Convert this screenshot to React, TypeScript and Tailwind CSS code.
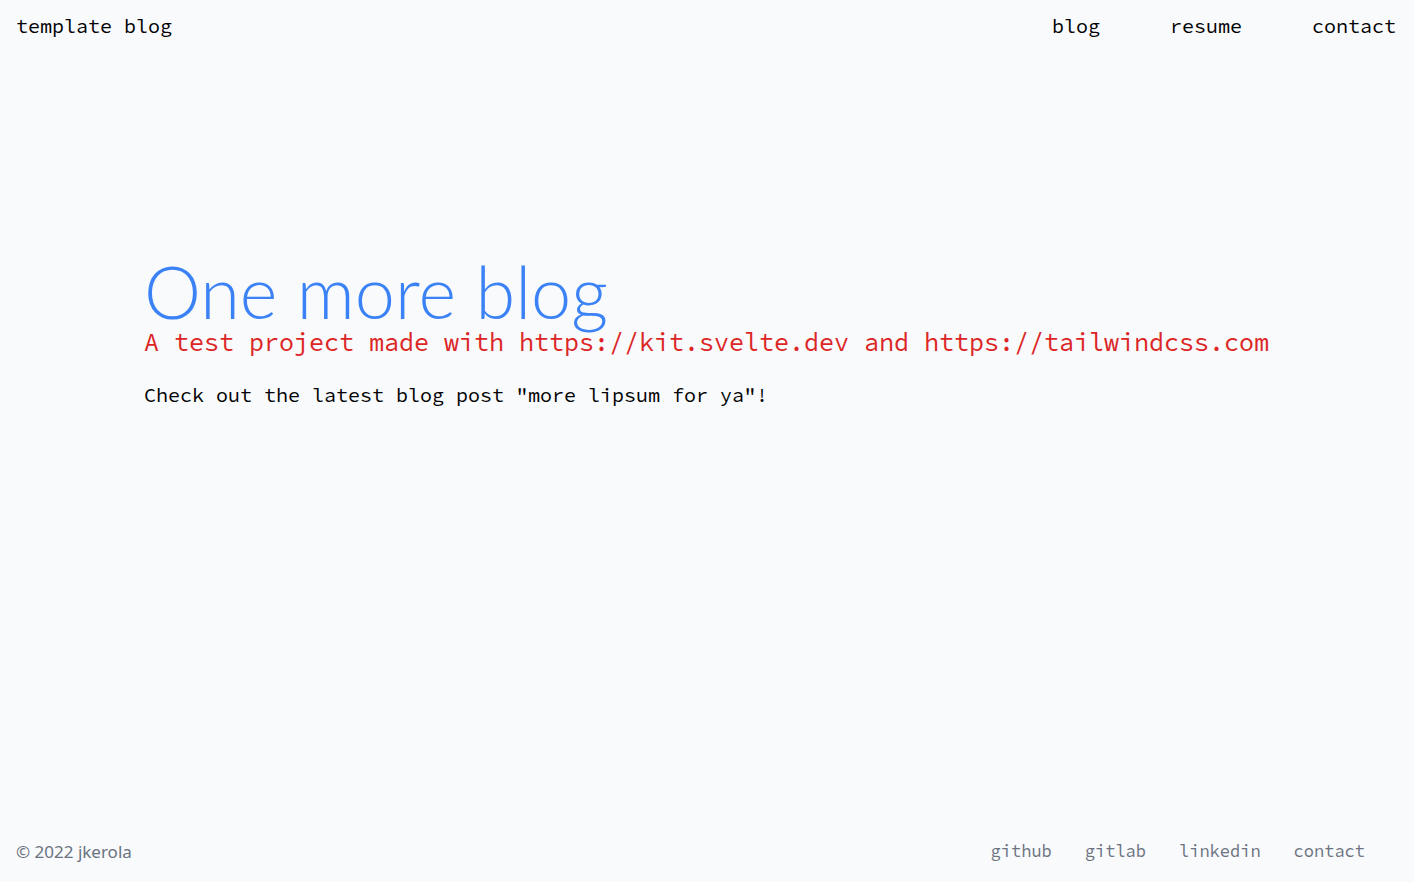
import React from 'react';

const mono = "font-['Source_Code_Pro','DejaVu_Sans_Mono','Liberation_Mono',monospace]";

export default function App() {
  const nav = ["blog", "resume", "contact"];
  const links = ["github", "gitlab", "linkedin", "contact"];

  return (
    <div className="min-h-screen bg-[#f8fafc] flex flex-col text-black">
      <header className={`flex items-center justify-between pl-4 pr-[18px] pt-3 text-xl ${mono}`}>
        <a>template blog</a>
        <nav className="flex gap-[70px]">
          {nav.map(n => (
            <a key={n}>{n}</a>
          ))}
        </nav>
      </header>

      <main className="flex-1 px-36 pt-[215px]">
        <h1 className="text-[72px] leading-none font-light text-[#3b82f6] font-['Lato',sans-serif]">
          One more blog
        </h1>
        <p className={`text-[25px] leading-8 text-[#dc2626] -mt-[1px] ${mono}`}>
          A test project made with https://kit.svelte.dev and https://tailwindcss.com
        </p>
        <p className={`text-xl mt-[23px] ${mono}`}>
          Check out the latest blog post "more lipsum for ya"!
        </p>
      </main>

      <footer className="flex items-center justify-between px-4 pb-[18px]">
        <span className="text-[17px] text-[#6b7280] font-['Noto_Sans',sans-serif]">© 2022 jkerola</span>
        <div className={`flex gap-[33px] mr-[33px] text-[17px] text-[#6b7280] ${mono}`}>
          {links.map(l => (
            <a key={l}>{l}</a>
          ))}
        </div>
      </footer>
    </div>
  );
}
